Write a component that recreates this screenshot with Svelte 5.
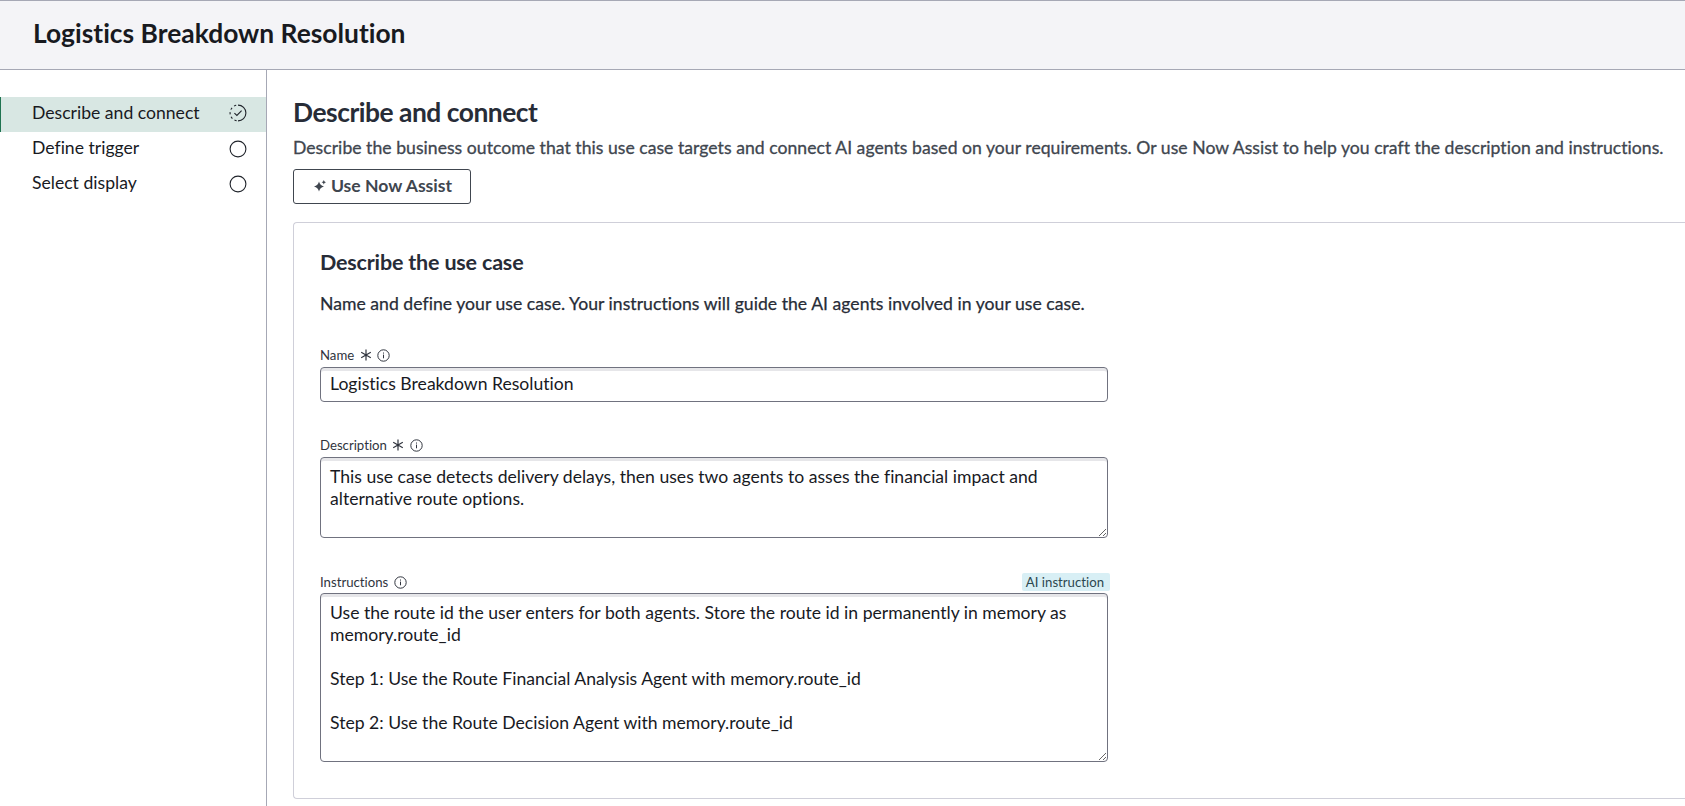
<script>
  const steps = [
    { label: 'Describe and connect', active: true },
    { label: 'Define trigger', active: false },
    { label: 'Select display', active: false }
  ];

  let name = $state('Logistics Breakdown Resolution');
  let description = $state(
    'This use case detects delivery delays, then uses two agents to asses the financial impact and alternative route options.'
  );
  let instructions = $state(
    'Use the route id the user enters for both agents. Store the route id in permanently in memory as memory.route_id\n\nStep 1: Use the Route Financial Analysis Agent with memory.route_id\n\nStep 2: Use the Route Decision Agent with memory.route_id'
  );
</script>

{#snippet required()}
  <svg class="star" width="12" height="12" viewBox="0 0 12 12" aria-hidden="true">
    <path d="M6 .6v10.8M1.2 3.3l9.6 5.4M10.8 3.3L1.2 8.7" />
  </svg>
{/snippet}

{#snippet info()}
  <svg class="info" width="13" height="13" viewBox="0 0 13 13" aria-hidden="true">
    <circle cx="6.5" cy="6.5" r="5.7" />
    <path d="M6.5 5.6v3.7M6.5 3.5v1.1" />
  </svg>
{/snippet}

<div class="page">
  <header><h1>Logistics Breakdown Resolution</h1></header>

  <div class="body">
    <nav>
      {#each steps as step}
        <div class="step" class:active={step.active}>
          <span>{step.label}</span>
          {#if step.active}
            <svg width="18" height="18" viewBox="0 0 18 18" aria-hidden="true">
              <path d="M9 1.1a7.9 7.9 0 0 1 0 15.8" />
              <path d="M9 16.9A7.9 7.9 0 0 1 9 1.1" stroke-dasharray="2.2 2.6" stroke-dashoffset="-1.4" />
              <path d="M5.4 9.1l2.5 2.4 4.7-4.8" />
            </svg>
          {:else}
            <svg width="18" height="18" viewBox="0 0 18 18" aria-hidden="true">
              <circle cx="9" cy="9" r="7.9" />
            </svg>
          {/if}
        </div>
      {/each}
    </nav>

    <main>
      <h2>Describe and connect</h2>
      <p class="lead">Describe the business outcome that this use case targets and connect AI agents based on your requirements. Or use Now Assist to help you craft the description and instructions.</p>
      <button type="button">
        <svg width="12" height="12" viewBox="0 0 12 12" aria-hidden="true">
          <path d="M5 1.6Q5.9 5.7 10 6.6Q5.9 7.5 5 11.6Q4.1 7.5 0 6.6Q4.1 5.7 5 1.6Z" />
          <path d="M9.8 0Q10.1 1.8 12 2.2Q10.1 2.6 9.8 4.4Q9.5 2.6 7.6 2.2Q9.5 1.8 9.8 0Z" />
        </svg>
        <span>Use Now Assist</span>
      </button>

      <section>
        <h3>Describe the use case</h3>
        <p class="intro">Name and define your use case. Your instructions will guide the AI agents involved in your use case.</p>

        <div class="field">
          <div class="label"><label for="name">Name</label>{@render required()}{@render info()}</div>
          <input id="name" bind:value={name} />
        </div>

        <div class="field">
          <div class="label"><label for="description">Description</label>{@render required()}{@render info()}</div>
          <textarea id="description" class="short" spellcheck="false" bind:value={description}></textarea>
        </div>

        <div class="field">
          <div class="label low">
            <label for="instructions">Instructions</label>{@render info()}
            <span class="badge">AI instruction</span>
          </div>
          <textarea id="instructions" class="tall" spellcheck="false" bind:value={instructions}></textarea>
        </div>
      </section>
    </main>
  </div>
</div>

<style>
  :global(body) { margin: 0; background: #fff; overflow: hidden; }
  .page {
    height: 806px;
    display: flex;
    flex-direction: column;
    overflow: hidden;
    font-family: Lato, 'Open Sans', sans-serif;
    color: #181a1f;
  }
  .page * { box-sizing: border-box; font-variant-ligatures: none; }
  h1, h2, h3, p { margin: 0; white-space: nowrap; }
  header {
    flex: none;
    height: 70px;
    padding: 0 33px;
    display: flex;
    align-items: center;
    background: #f4f4f7;
    border-top: 1px solid #a6a8b5;
    border-bottom: 1px solid #a6a8b5;
  }
  h1 { font-size: 26.4px; line-height: 32px; font-weight: 700; padding-bottom: 4px; }
  .body { flex: 1; display: flex; min-height: 0; }
  nav { flex: none; width: 267px; padding-top: 27px; border-right: 1px solid #a6a8b5; }
  .step {
    height: 35px;
    padding: 0 19px 0 32px;
    display: flex;
    align-items: center;
    justify-content: space-between;
    font-size: 17.6px;
    line-height: 22px;
  }
  .step span { padding-bottom: 3px; }
  .step svg { fill: none; stroke: #20242b; stroke-width: 1.1; margin-top: -1px; }
  .step.active { background: #d8e7e3; box-shadow: inset 1px 0 #1f7350; }
  .step.active svg { margin-top: -3px; }
  main { flex: 1; min-width: 0; padding: 26px 0 0 26px; }
  h2 { font-size: 26.4px; line-height: 32px; font-weight: 700; color: #272c37; letter-spacing: -0.48px; }
  .lead {
    margin-top: 8px;
    font-size: 17.6px;
    line-height: 24px;
    letter-spacing: 0.031px;
    color: #40464f;
    -webkit-text-stroke: 0.3px #40464f;
  }
  button {
    margin-top: 9px;
    width: 178px;
    height: 35px;
    padding: 0 0 2px 2px;
    display: flex;
    align-items: center;
    justify-content: center;
    gap: 5px;
    border: 1px solid #40464f;
    border-radius: 3px;
    background: #fff;
    color: #40464f;
    font: 700 17.6px/22px Lato, 'Open Sans', sans-serif;
  }
  button svg { fill: #40464f; margin-top: 1px; }
  section {
    margin-top: 18px;
    height: 577px;
    padding: 26px 0 0 26px;
    border: 1px solid #cfcfd9;
    border-right: 0;
    border-radius: 4px 0 0 4px;
  }
  h3 { font-size: 21.5px; line-height: 26px; font-weight: 700; color: #272c37; letter-spacing: -0.18px; }
  .intro {
    margin-top: 18px;
    font-size: 17.6px;
    line-height: 22px;
    letter-spacing: 0.031px;
    color: #272c37;
    -webkit-text-stroke: 0.25px #272c37;
  }
  .field { width: 788px; display: flex; flex-direction: column; }
  .label {
    height: 24px;
    display: flex;
    align-items: center;
    gap: 5.5px;
    font-size: 13.2px;
    line-height: 18px;
    color: #30343e;
  }
  .low { padding-top: 2px; }
  .intro + .field { margin-top: 28px; }
  .field + .field { margin-top: 31px; }
  .star, .info { fill: none; stroke: #30343e; stroke-width: 1; }
  .star { stroke-width: 1.2; }
  .badge {
    margin: 0 -2px 0 auto;
    padding: 0 6px 0 4px;
    height: 18px;
    border-radius: 2px;
    background: #d8eff5;
    color: #2c474f;
  }
  input, textarea {
    display: block;
    width: 100%;
    margin: 0;
    border: 1px solid #70727f;
    border-radius: 4px;
    outline: 0;
    background: #fff;
    box-shadow: inset 0 3px #e6e6e9;
    color: #181a1f;
    font: 400 17.6px/22px Lato, 'Open Sans', sans-serif;
  }
  input { height: 35px; padding: 0 9px 3px; }
  textarea { padding: 8px 9px; resize: vertical; overflow: hidden; }
  .short { height: 81px; }
  .tall { height: 169px; }
</style>
